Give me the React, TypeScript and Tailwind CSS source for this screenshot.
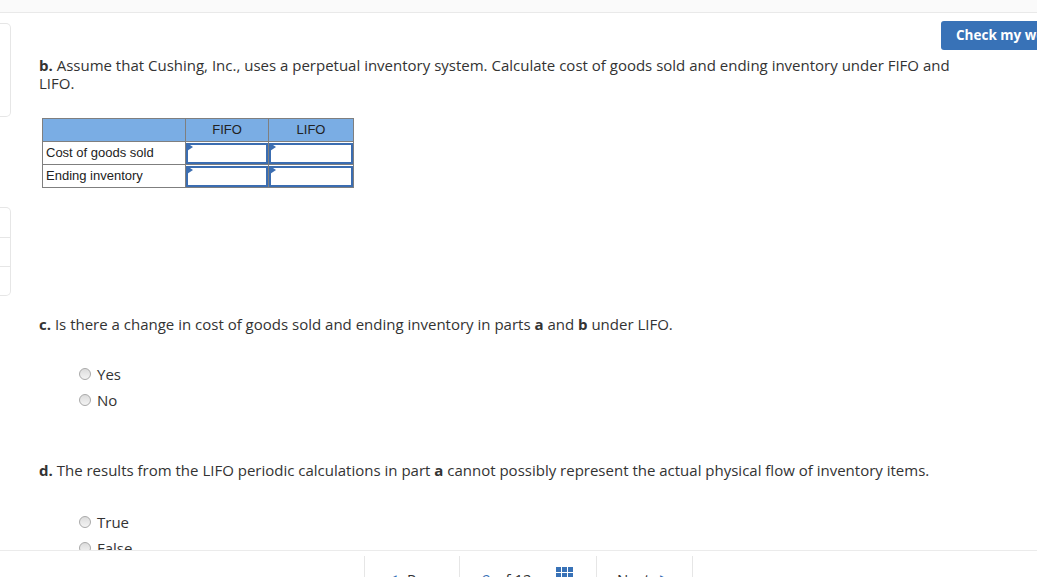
import React from "react";

const bodyFont = { fontFamily: '"Open Sans", "Liberation Sans", sans-serif' };

function Radio({ label }: { label: string }) {
  return (
    <label className="flex h-[26px] items-center gap-[6px] pl-[40px] text-[15px] text-[#333]">
      <span className="h-[12px] w-[12px] rounded-full border border-[#a9a9a9] bg-gradient-to-b from-[#dcdcdc] to-[#f4f4f4]" />
      {label}
    </label>
  );
}

function InputCell() {
  return (
    <td className="relative h-[23px] border border-[#7f7f7f] p-0">
      <div className="h-[21px] border-2 border-[#3b6db1] bg-white" />
      <span className="absolute left-[1px] top-[1px] h-0 w-0 border-y-[4px] border-l-[6px] border-y-transparent border-l-[#3b6db1]" />
    </td>
  );
}

export default function App() {
  return (
    <div className="flex h-[577px] flex-col overflow-hidden bg-white" style={bodyFont}>
      {/* top strip */}
      <div className="h-[13px] shrink-0 border-b border-[#e9e9e9] bg-[#fafafa]" />

      <div className="flex min-h-0 flex-1 overflow-hidden">
        {/* left rail */}
        <div className="w-[11px] shrink-0">
          <div className="mt-[10px] h-[94px] rounded-r-[5px] border border-l-0 border-[#e6e6e6]" />
          <div className="mt-[90px] flex h-[89px] flex-col rounded-r-[5px] border border-l-0 border-[#e6e6e6]">
            <div className="h-[30px] border-b border-[#e6e6e6]" />
            <div className="h-[29px] border-b border-[#e6e6e6]" />
          </div>
        </div>

        <div className="flex-1 pl-[28px]">
          <div className="mt-[8px] flex justify-end">
            <button className="-mr-[30px] h-[29px] w-[126px] whitespace-nowrap rounded-l-[3px] bg-[#3872b7] pl-[15px] text-left text-[13.5px] font-bold text-white">
              Check my work
            </button>
          </div>

          <p className="mt-[6px] w-[935px] text-[15px] leading-[18px] text-[#333]">
            <b>b.</b> Assume that Cushing, Inc., uses a perpetual inventory system. Calculate cost of goods sold and ending inventory under FIFO and LIFO.
          </p>

          <table
            className="ml-[3px] mt-[26px] border-collapse text-[13px] text-[#222]"
            style={{ fontFamily: '"Liberation Sans", Arial, sans-serif' }}
          >
            <thead>
              <tr className="h-[23px] bg-[#7aade4]">
                <th className="w-[143px] border border-[#7f7f7f]" />
                <th className="w-[83px] border border-[#7f7f7f] font-normal">FIFO</th>
                <th className="w-[85px] border border-[#7f7f7f] font-normal">LIFO</th>
              </tr>
            </thead>
            <tbody>
              <tr>
                <td className="h-[23px] border border-[#7f7f7f] pl-[3px]">Cost of goods sold</td>
                <InputCell />
                <InputCell />
              </tr>
              <tr>
                <td className="h-[23px] border border-[#7f7f7f] pl-[3px]">Ending inventory</td>
                <InputCell />
                <InputCell />
              </tr>
            </tbody>
          </table>

          <p className="mt-[127px] text-[15px] leading-[18px] text-[#333]">
            <b>c.</b> Is there a change in cost of goods sold and ending inventory in parts <b>a</b> and <b>b</b> under LIFO.
          </p>

          <div className="mt-[28px]">
            <Radio label="Yes" />
            <Radio label="No" />
          </div>

          <p className="mt-[48px] text-[15px] leading-[18px] text-[#333]">
            <b>d.</b> The results from the LIFO periodic calculations in part <b>a</b> cannot possibly represent the actual physical flow of inventory items.
          </p>

          <div className="mt-[30px]">
            <Radio label="True" />
            <Radio label="False" />
          </div>
        </div>
      </div>

      {/* bottom nav */}
      <div className="h-[27px] shrink-0 border-t border-[#ebebeb] bg-white">
        <div className="ml-[364px] mt-[5px] flex h-[40px] text-[15px] text-[#333]">
          <div className="flex w-[96px] items-start gap-[10px] border-x border-[#e6e6e6] pl-[20px] pt-[12px]">
            <span className="text-[#3872b7]">◀</span>
            <span>Prev</span>
          </div>
          <div className="flex w-[137px] items-start border-r border-[#e6e6e6] pl-[22px] pt-[12px]">
            <span className="text-[#3872b7]">9</span>
            <span className="ml-[6px]">of 12</span>
            <span className="ml-[24px] mt-[-1px] grid grid-cols-3 gap-[1px]">
              <span className="h-[5px] w-[5px] bg-[#3872b7]" />
              <span className="h-[5px] w-[5px] bg-[#3872b7]" />
              <span className="h-[5px] w-[5px] bg-[#3872b7]" />
              <span className="h-[5px] w-[5px] bg-[#3872b7]" />
              <span className="h-[5px] w-[5px] bg-[#3872b7]" />
              <span className="h-[5px] w-[5px] bg-[#3872b7]" />
            </span>
          </div>
          <div className="flex w-[96px] items-start gap-[10px] border-r border-[#e6e6e6] pl-[20px] pt-[12px]">
            <span>Next</span>
            <span className="text-[#3872b7]">▶</span>
          </div>
        </div>
      </div>
    </div>
  );
}
